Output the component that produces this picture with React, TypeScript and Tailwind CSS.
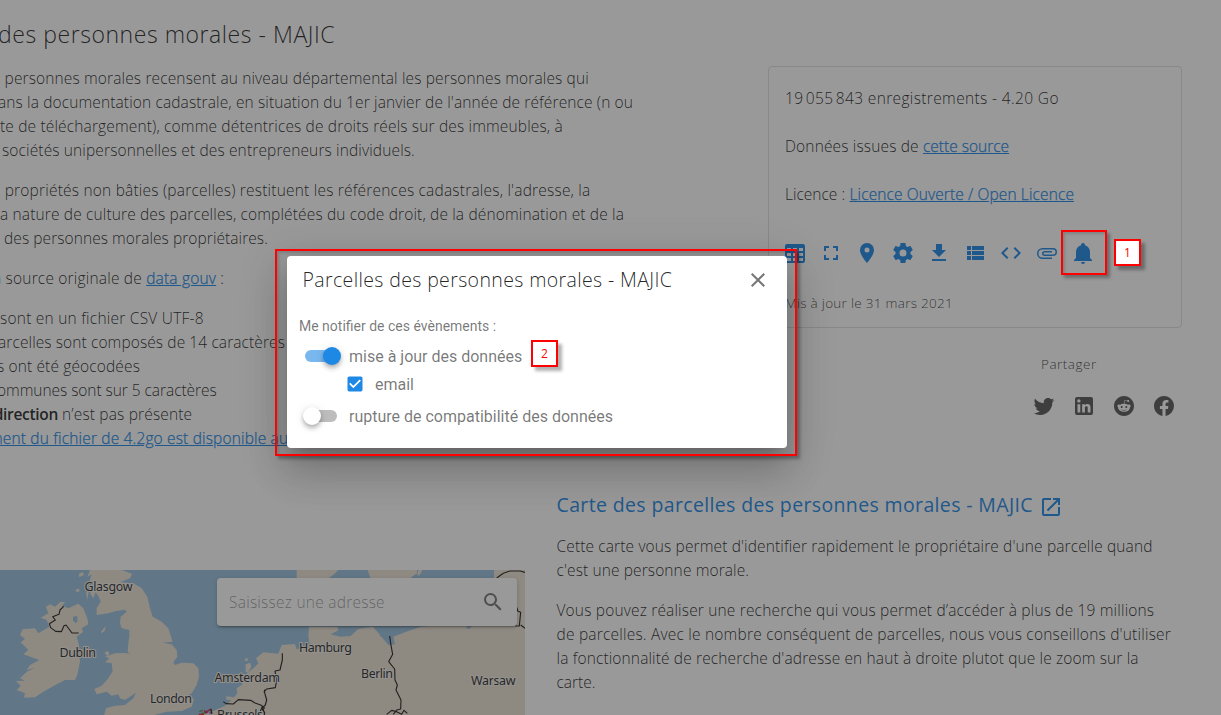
import React from "react";

const icons = {
  tableLarge:
    "M4,3H20A2,2 0 0,1 22,5V20A2,2 0 0,1 20,22H4A2,2 0 0,1 2,20V5A2,2 0 0,1 4,3M4,7V10H8V7H4M10,7V10H14V7H10M20,10V7H16V10H20M4,12V15H8V12H4M4,20H8V17H4V20M10,12V15H14V12H10M10,20H14V17H10V20M20,20V17H16V20H20M20,12H16V15H20V12Z",
  fullscreen:
    "M5,5H10V7H7V10H5V5M14,5H19V10H17V7H14V5M17,14H19V19H14V17H17V14M10,17V19H5V14H7V17H10Z",
  marker:
    "M12,11.5A2.5,2.5 0 0,1 9.5,9A2.5,2.5 0 0,1 12,6.5A2.5,2.5 0 0,1 14.5,9A2.5,2.5 0 0,1 12,11.5M12,2A7,7 0 0,0 5,9C5,14.25 12,22 12,22C12,22 19,14.25 19,9A7,7 0 0,0 12,2Z",
  cog: "M12,15.5A3.5,3.5 0 0,1 8.5,12A3.5,3.5 0 0,1 12,8.5A3.5,3.5 0 0,1 15.5,12A3.5,3.5 0 0,1 12,15.5M19.43,12.97C19.47,12.65 19.5,12.33 19.5,12C19.5,11.67 19.47,11.34 19.43,11L21.54,9.37C21.73,9.22 21.78,8.95 21.66,8.73L19.66,5.27C19.54,5.05 19.27,4.96 19.05,5.05L16.56,6.05C16.04,5.66 15.5,5.32 14.87,5.07L14.5,2.42C14.46,2.18 14.25,2 14,2H10C9.75,2 9.54,2.18 9.5,2.42L9.13,5.07C8.5,5.32 7.96,5.66 7.44,6.05L4.95,5.05C4.73,4.96 4.46,5.05 4.34,5.27L2.34,8.73C2.21,8.95 2.27,9.22 2.46,9.37L4.57,11C4.53,11.34 4.5,11.67 4.5,12C4.5,12.33 4.53,12.65 4.57,12.97L2.46,14.63C2.27,14.78 2.21,15.05 2.34,15.27L4.34,18.73C4.46,18.95 4.73,19.03 4.95,18.95L7.44,17.94C7.96,18.34 8.5,18.68 9.13,18.93L9.5,21.58C9.54,21.82 9.75,22 10,22H14C14.25,22 14.46,21.82 14.5,21.58L14.87,18.93C15.5,18.67 16.04,18.34 16.56,17.94L19.05,18.95C19.27,19.03 19.54,18.95 19.66,18.73L21.66,15.27C21.78,15.05 21.73,14.78 21.54,14.63L19.43,12.97Z",
  download: "M5,20H19V18H5M19,9H15V3H9V9H5L12,16L19,9Z",
  viewList: "M9,5V9H21V5M9,19H21V15H9M9,14H21V10H9M4,9H8V5H4M4,19H8V15H4M4,14H8V10H4V14Z",
  code: "M14.6,16.6L19.2,12L14.6,7.4L16,6L22,12L16,18L14.6,16.6M9.4,16.6L4.8,12L9.4,7.4L8,6L2,12L8,18L9.4,16.6Z",
  attachment:
    "M7.5,18A5.5,5.5 0 0,1 2,12.5A5.5,5.5 0 0,1 7.5,7H18A4,4 0 0,1 22,11A4,4 0 0,1 18,15H9.5A2.5,2.5 0 0,1 7,12.5A2.5,2.5 0 0,1 9.5,10H17V11.5H9.5A1,1 0 0,0 8.5,12.5A1,1 0 0,0 9.5,13.5H18A2.5,2.5 0 0,0 20.5,11A2.5,2.5 0 0,0 18,8.5H7.5A4,4 0 0,0 3.5,12.5A4,4 0 0,0 7.5,16.5H17V18H7.5Z",
  bell: "M21,19V20H3V19L5,17V11C5,7.9 7.03,5.17 10,4.29C10,4.19 10,4.1 10,4A2,2 0 0,1 12,2A2,2 0 0,1 14,4C14,4.1 14,4.19 14,4.29C16.97,5.17 19,7.9 19,11V17L21,19M14,21A2,2 0 0,1 12,23A2,2 0 0,1 10,21",
  twitter:
    "M22.46,6C21.69,6.35 20.86,6.58 20,6.69C20.88,6.16 21.56,5.32 21.88,4.31C21.05,4.81 20.13,5.16 19.16,5.36C18.37,4.5 17.26,4 16,4C13.65,4 11.73,5.92 11.73,8.29C11.73,8.63 11.77,8.96 11.84,9.27C8.28,9.09 5.11,7.38 3,4.79C2.63,5.42 2.42,6.16 2.42,6.94C2.42,8.43 3.17,9.75 4.33,10.5C3.62,10.5 2.96,10.3 2.38,10C2.38,10 2.38,10 2.38,10.03C2.38,12.11 3.86,13.85 5.82,14.24C5.46,14.34 5.08,14.39 4.69,14.39C4.42,14.39 4.15,14.36 3.89,14.31C4.43,16 6,17.26 7.89,17.29C6.43,18.45 4.58,19.13 2.56,19.13C2.22,19.13 1.88,19.11 1.54,19.07C3.44,20.29 5.7,21 8.12,21C16,21 20.33,14.46 20.33,8.79C20.33,8.6 20.33,8.42 20.32,8.23C21.16,7.63 21.88,6.87 22.46,6Z",
  linkedin:
    "M19 3A2 2 0 0 1 21 5V19A2 2 0 0 1 19 21H5A2 2 0 0 1 3 19V5A2 2 0 0 1 5 3H19M18.5 18.5V13.2A3.26 3.26 0 0 0 15.24 9.94C14.39 9.94 13.4 10.46 12.92 11.24V10.13H10.13V18.5H12.92V13.57C12.92 12.8 13.54 12.17 14.31 12.17A1.4 1.4 0 0 1 15.71 13.57V18.5H18.5M6.88 8.56A1.68 1.68 0 0 0 8.56 6.88C8.56 5.95 7.81 5.19 6.88 5.19A1.69 1.69 0 0 0 5.19 6.88C5.19 7.81 5.95 8.56 6.88 8.56M8.27 18.5V10.13H5.5V18.5H8.27Z",
  reddit:
    "M14.5 15.41C14.58 15.5 14.58 15.69 14.5 15.8C13.77 16.5 12.41 16.56 12 16.56C11.61 16.56 10.25 16.5 9.54 15.8C9.44 15.69 9.44 15.5 9.54 15.41C9.65 15.31 9.82 15.31 9.92 15.41C10.38 15.87 11.33 16 12 16C12.69 16 13.66 15.87 14.1 15.41C14.21 15.31 14.38 15.31 14.5 15.41M10.75 13.04C10.75 12.47 10.28 12 9.71 12C9.14 12 8.67 12.47 8.67 13.04C8.67 13.61 9.14 14.09 9.71 14.08C10.28 14.08 10.75 13.61 10.75 13.04M14.29 12C13.72 12 13.25 12.5 13.25 13.05S13.72 14.09 14.29 14.09C14.86 14.09 15.33 13.61 15.33 13.05S14.86 12 14.29 12M22 12C22 17.5 17.5 22 12 22S2 17.5 2 12C2 6.5 6.5 2 12 2S22 6.5 22 12M18.67 12C18.67 11.19 18 10.54 17.22 10.54C16.82 10.54 16.46 10.7 16.2 10.95C15.2 10.23 13.83 9.77 12.3 9.71L12.97 6.58L15.14 7.05C15.16 7.6 15.62 8.04 16.18 8.04C16.75 8.04 17.22 7.57 17.22 7C17.22 6.43 16.75 5.96 16.18 5.96C15.77 5.96 15.41 6.2 15.25 6.55L12.82 6.03C12.75 6 12.68 6.03 12.63 6.07C12.57 6.11 12.54 6.17 12.53 6.24L11.79 9.72C10.24 9.77 8.84 10.23 7.82 10.96C7.56 10.71 7.2 10.56 6.81 10.56C6 10.56 5.35 11.21 5.35 12C5.35 12.61 5.71 13.11 6.21 13.34C6.19 13.5 6.18 13.62 6.18 13.78C6.18 16 8.79 17.85 12 17.85C15.23 17.85 17.85 16.03 17.85 13.78C17.85 13.64 17.84 13.5 17.81 13.34C18.31 13.11 18.67 12.6 18.67 12Z",
  facebook:
    "M12 2.04C6.5 2.04 2 6.53 2 12.06C2 17.06 5.66 21.21 10.44 21.96V14.96H7.9V12.06H10.44V9.85C10.44 7.34 11.93 5.96 14.22 5.96C15.31 5.96 16.45 6.15 16.45 6.15V8.62H15.19C13.95 8.62 13.56 9.39 13.56 10.18V12.06H16.34L15.89 14.96H13.56V21.96A10 10 0 0 0 22 12.06C22 6.53 17.5 2.04 12 2.04Z",
  close:
    "M19,6.41L17.59,5L12,10.59L6.41,5L5,6.41L10.59,12L5,17.59L6.41,19L12,13.41L17.59,19L19,17.59L13.41,12L19,6.41Z",
  magnify:
    "M9.5,3A6.5,6.5 0 0,1 16,9.5C16,11.11 15.41,12.59 14.44,13.73L14.71,14H15.5L20.5,19L19,20.5L14,15.5V14.71L13.73,14.44C12.59,15.41 11.11,16 9.5,16A6.5,6.5 0 0,1 3,9.5A6.5,6.5 0 0,1 9.5,3M9.5,5C7,5 5,7 5,9.5C5,12 7,14 9.5,14C12,14 14,12 14,9.5C14,7 12,5 9.5,5Z",
  openInNew:
    "M14,3V5H17.59L7.76,14.83L9.17,16.24L19,6.41V10H21V3M19,19H5V5H12V3H5C3.89,3 3,3.9 3,5V19A2,2 0 0,0 5,21H19A2,2 0 0,0 21,19V12H19V19Z",
  checkbox:
    "M10,17L5,12L6.41,10.58L10,14.17L17.59,6.58L19,8M19,3H5C3.89,3 3,3.89 3,5V19A2,2 0 0,0 5,21H19A2,2 0 0,0 21,19V5C21,3.89 20.1,3 19,3Z",
};

function Icon({ name, className = "size-6" }: { name: keyof typeof icons; className?: string }) {
  return (
    <svg viewBox="0 0 24 24" className={`shrink-0 ${className}`} fill="currentColor" aria-hidden="true">
      <path d={icons[name]} />
    </svg>
  );
}

function Line({ className = "", children }: { className?: string; children: React.ReactNode }) {
  return <span className={`block h-6 whitespace-nowrap ${className}`}>{children}</span>;
}

function Link({ className = "", children }: { className?: string; children: React.ReactNode }) {
  return (
    <a href="#" className={`text-[#1e88e5] underline [-webkit-text-stroke:0.25px_#1e88e5] ${className}`}>
      {children}
    </a>
  );
}

function Description() {
  return (
    <div className="h-[570px] w-[752px] shrink-0 pt-4">
      <h1 className="-ml-0.5 text-[23px] leading-9 font-light tracking-[0.55px] whitespace-nowrap">
        des personnes morales - MAJIC
      </h1>
      <p className="mt-3.5">
        <Line className="-ml-[7px] tracking-[0.135px]">
          s personnes morales recensent au niveau départemental les personnes morales qui
        </Line>
        <Line className="-ml-0.5 tracking-[0.12px]">
          ans la documentation cadastrale, en situation du 1er janvier de l'année de référence (n ou
        </Line>
        <Line className="tracking-[0.15px]">
          te de téléchargement), comme détentrices de droits réels sur des immeubles, à
        </Line>
        <Line className="ml-0.5 tracking-[0.13px]">sociétés unipersonnelles et des entrepreneurs individuels.</Line>
      </p>
      <p className="mt-4">
        <Line className="-ml-[7px] tracking-[0.2px]">
          s propriétés non bâties (parcelles) restituent les références cadastrales, l'adresse, la
        </Line>
        <Line className="tracking-[0.14px]">
          a nature de culture des parcelles, complétées du code droit, de la dénomination et de la
        </Line>
        <Line className="ml-1 tracking-[0.07px]">des personnes morales propriétaires.</Line>
      </p>
      <p className="mt-4">
        <Line className="-ml-[7px] tracking-[0.19px]">
          a source originale de <Link>data gouv</Link> :
        </Line>
      </p>
      <ul className="mt-4">
        <li>
          <Line className="tracking-[0.23px]">sont en un fichier CSV UTF-8</Line>
        </li>
        <li>
          <Line className="-ml-0.5 tracking-[0.1px]">arcelles sont composés de 14 caractères</Line>
        </li>
        <li>
          <Line className="-ml-[3px] tracking-[0.13px]">s ont été géocodées</Line>
        </li>
        <li>
          <Line className="-ml-[3px] tracking-[-0.05px]">ommunes sont sur 5 caractères</Line>
        </li>
        <li>
          <Line className="flex tracking-[0.16px]">
            <b className="flex w-[58px] justify-end font-semibold tracking-[-0.3px]">direction</b>
            <span className="ml-1">n’est pas présente</span>
          </Line>
        </li>
        <li>
          <Line className="-ml-[11px] tracking-[0.16px]">
            <Link>ment du fichier de 4.2go est disponible au</Link>
          </Line>
        </li>
      </ul>
    </div>
  );
}

function InfoCard() {
  return (
    <div className="h-[262px] rounded border border-black/12 px-4 pt-[19px]">
      <p className="h-6 tracking-[0.36px] whitespace-nowrap">19&#8239;055&#8239;843 enregistrements - 4.20 Go</p>
      <p className="mt-6 flex h-6 whitespace-nowrap">
        <span className="w-[138px] tracking-[0.15px]">Données issues de</span>
        <Link className="tracking-[-0.01px]">cette source</Link>
      </p>
      <p className="mt-6 flex h-6 whitespace-nowrap">
        <span className="w-[64.5px] shrink-0">Licence :</span>
        <Link className="tracking-[0.11px]">Licence Ouverte / Open Licence</Link>
      </p>
      <div className="mt-[35px] -ml-0.5 flex gap-3 text-[#1e88e5]">
        <Icon name="tableLarge" />
        <Icon name="fullscreen" />
        <Icon name="marker" />
        <Icon name="cog" />
        <Icon name="download" />
        <Icon name="viewList" />
        <Icon name="code" />
        <Icon name="attachment" />
        <Icon name="bell" />
      </div>
      <p className="mt-[26px] text-[13.5px] tracking-[0.28px] text-black/75">Mis à jour le 31 mars 2021</p>
    </div>
  );
}

function Side() {
  return (
    <aside className="ml-4 w-[414px] shrink-0 pt-[66px]">
      <InfoCard />
      <p className="mt-6 ml-[273px] text-[13.5px] tracking-[0.5px] text-black/75">Partager</p>
      <div className="mt-[18px] ml-[264px] flex gap-4 text-black/66">
        <Icon name="twitter" />
        <Icon name="linkedin" />
        <Icon name="reddit" />
        <Icon name="facebook" />
      </div>
    </aside>
  );
}

const cities: [string, number, number, number][] = [
  ["Glasgow", 84.5, 21, 48],
  ["Dublin", 59.5, 87, 36.5],
  ["London", 150, 133, 42],
  ["Amsterdam", 214.5, 111.5, 65.5],
  ["Brussels", 217, 148.5, 46],
  ["Hamburg", 299, 81.5, 53],
  ["Berlin", 361, 108, 32],
  ["Warsaw", 471, 115, 44.5],
];

function MapView() {
  return (
    <div className="relative h-[145px] w-[525px] shrink-0 overflow-hidden bg-[#98bfdc]">
      <svg viewBox="0 0 525 145" className="block h-[145px] w-[525px]">
        <g transform="scale(0.33333) translate(0 -15)" fill="#ebe3d5">
          <path d="M270,15 L262,35 275,28 268,50 282,48 278,75 270,85 280,100 287,82 296,95 302,110 290,130 290,150 325,145 348,138 375,134 380,140 362,155 360,175 365,190 388,195 388,215 385,235 383,262 392,266 372,264 345,265 315,275 328,280 315,292 335,295 338,318 325,340 305,362 283,372 290,388 320,380 335,392 355,388 360,400 375,405 408,383 400,400 375,420 345,422 318,430 312,452 455,452 500,440 545,438 575,425 582,402 560,393 575,385 590,360 597,335 595,310 580,295 545,293 525,300 520,292 532,275 530,255 515,238 487,233 518,230 505,190 485,170 458,155 450,130 442,95 425,70 400,55 360,52 390,40 396,26 365,15Z" />
          <path d="M182,110 L165,125 150,118 138,125 145,145 122,158 140,165 148,185 115,205 105,190 68,193 60,210 75,222 62,232 85,255 70,268 118,285 90,300 80,315 105,308 80,320 60,340 75,347 48,348 62,362 50,375 75,385 72,398 105,397 130,380 170,358 195,345 225,345 232,330 240,290 237,240 230,215 250,200 245,190 265,178 262,160 250,130 235,116 205,130 185,122 196,112Z" />
          <path d="M228,72h10v8h-10zM236,28l12,-8 4,10 -14,6zM258,82l8,-2 -4,24zM303,200l14,-17 -3,14 -9,8zM313,265l8,-8 8,8 -6,8zM735,280h8v8h-8zM737,320v-22l14,-5 3,12 -10,18zM678,394l20,2 8,10 -26,-2z" />
          <path d="M600,452 L640,438 675,422 695,405 712,385 710,370 725,360 735,330 760,310 775,295 768,280 790,262 835,266 845,240 885,237 890,252 935,248 928,232 925,212 927,185 1012,185 1015,196 992,208 1020,215 1052,213 1075,192 1118,185 1136,205 1155,228 1165,240 1185,238 1180,215 1215,202 1262,185 1482,170 1482,15 1585,15 1585,455 600,455Z" />
          <path d="M890,15h125l-12,12 -16,12h-97zM1103,15h148v10l-20,14h-120zM1255,15h12l-8,16h-8z" />
          <g fill="#98bfdc">
            <path d="M219,155l12,-2 2,14 -5,8 -9,-8zM1400,184h16l-8,7h-8zM1140,205l16,5 -6,8 -10,-4z" />
          </g>
          <g fill="none" stroke="#26201f" strokeWidth="3.4" strokeLinejoin="round">
            <path d="M191,124 L180,135 177,148 158,155 166,165 148,176 152,188 167,199 184,200 192,182 198,180 207,192 216,204 236,204" />
            <path d="M670,410 L678,416 700,417 715,404 752,406 765,414 782,420 795,430" />
            <path d="M847,265 L847,285 840,315 825,318 830,345 826,368 800,372 793,380 800,405 796,420 785,430 795,445" />
            <path d="M1169,213 L1172,235 1178,268 1166,290 1184,312 1185,345 1192,360 1188,375 1203,405 1202,432 1190,435 1180,448 M1160,448 L1175,436 1190,440 1205,448 1212,436 1222,445" />
            <path d="M1490,39 L1510,25 1530,18 1560,18 1575,22 M1551,128 L1553,138 1562,142 1558,183 1545,183 M1562,180 L1575,190" />
            <path d="M780,440 L788,424 794,452 M795,374 l-3,8" />
          </g>
          <g fill="none" strokeWidth="4">
            <path d="M598,440l10,-4 M604,446l14,-4" stroke="#4e9a3f" />
            <path d="M612,436l6,8 8,-8 8,-4 M596,448h16" stroke="#e02a2a" />
            <path d="M618,436l4,8 M628,444h8" stroke="#a03bc0" />
            <path d="M632,432l4,14" stroke="#26201f" />
          </g>
        </g>
        <g
          fontFamily="Noto Sans, sans-serif"
          fontSize="12.5"
          fontWeight="400"
          fill="#2e2e2e"
          stroke="#f3efe8"
          strokeWidth="2.2"
          strokeLinejoin="round"
        >
          {cities.map(([name, x, y, width]) => (
            <text key={name} x={x} y={y} textLength={width} style={{ paintOrder: "stroke" }}>
              {name}
            </text>
          ))}
        </g>
      </svg>
      <div className="absolute top-2 right-2 flex h-12 w-[300px] items-center justify-between rounded bg-white pr-3 pl-3 shadow-[0_3px_1px_-2px_rgba(0,0,0,.2),0_2px_2px_0_rgba(0,0,0,.14),0_1px_5px_0_rgba(0,0,0,.12)]">
        <span className="tracking-[0.24px] whitespace-nowrap text-black/42">Saisissez une adresse</span>
        <Icon name="magnify" className="size-6 text-black/54" />
      </div>
    </div>
  );
}

function MapSection() {
  return (
    <section className="absolute top-[490px] left-[556.5px] w-[630px]">
      <h2 className="flex h-8 items-center whitespace-nowrap text-[#1e88e5]">
        <span className="-mt-0.5 w-[482px] text-[19.5px] font-normal tracking-[0.36px]">
          Carte des parcelles des personnes morales - MAJIC
        </span>
        <Icon name="openInNew" className="mt-px size-6" />
      </h2>
      <p className="mt-3">
        <Line className="tracking-[0.125px]">
          Cette carte vous permet d'identifier rapidement le propriétaire d'une parcelle quand
        </Line>
        <Line className="tracking-[0.11px]">c'est une personne morale.</Line>
      </p>
      <p className="mt-4">
        <Line className="tracking-[0.165px]">
          Vous pouvez réaliser une recherche qui vous permet d’accéder à plus de 19 millions
        </Line>
        <Line className="tracking-[0.205px]">
          de parcelles. Avec le nombre conséquent de parcelles, nous vous conseillons d'utiliser
        </Line>
        <Line className="tracking-[0.13px]">
          la fonctionnalité de recherche d'adresse en haut à droite plutot que le zoom sur la
        </Line>
        <Line>carte.</Line>
      </p>
    </section>
  );
}

const thumb =
  "absolute top-1/2 size-[18px] -translate-y-1/2 rounded-full shadow-[0_2px_4px_-1px_rgba(0,0,0,.2),0_4px_5px_0_rgba(0,0,0,.14),0_1px_10px_0_rgba(0,0,0,.12)]";

function Switch({ on }: { on: boolean }) {
  return (
    <span className="relative ml-4 h-6 w-[46px] shrink-0">
      <span
        className={`absolute top-1/2 left-0.5 h-3 w-8 -translate-y-1/2 rounded-full ${on ? "bg-[#78b8ef]" : "bg-[#bdbdbd]"}`}
      />
      <span className={`${thumb} ${on ? "left-5 bg-[#1e88e5]" : "left-0 bg-white"}`} />
    </span>
  );
}

function NotifyDialog() {
  return (
    <div
      role="dialog"
      className="absolute top-64 left-[287px] h-48 w-[500px] rounded bg-white shadow-[0_11px_15px_-7px_rgba(0,0,0,.2),0_24px_38px_3px_rgba(0,0,0,.14),0_9px_46px_8px_rgba(0,0,0,.12)]"
    >
      <div className="flex h-12 items-center justify-between pr-[17px] pl-[15.5px]">
        <h3 className="-mt-px text-[19.5px] font-light tracking-[0.37px] whitespace-nowrap text-black/87">
          Parcelles des personnes morales - MAJIC
        </h3>
        <Icon name="close" className="size-6 text-black/54" />
      </div>
      <div className="font-[Roboto,sans-serif] text-base font-normal text-black/54">
        <p className="mt-3 ml-3 h-5 text-sm leading-5">Me notifier de ces évènements :</p>
        <label className="mt-2 flex h-6 items-center">
          <Switch on />
          <span className="mt-0.5">mise à jour des données</span>
        </label>
        <label className="mt-1 ml-[58px] flex h-6 items-center">
          <Icon name="checkbox" className="size-5 text-[#1e88e5]" />
          <span className="mt-0.5 ml-2.5">email</span>
        </label>
        <label className="mt-2 flex h-6 items-center">
          <Switch on={false} />
          <span className="mt-0.5">rupture de compatibilité des données</span>
        </label>
      </div>
    </div>
  );
}

function Callout({ className, children }: { className: string; children?: React.ReactNode }) {
  return (
    <div
      className={`absolute flex items-center justify-center border-2 border-[#ff0000] font-['Open_Sans',sans-serif] text-xs font-normal text-[#ff0000] ${className}`}
    >
      {children}
    </div>
  );
}

export default function App() {
  return (
    <div className="relative h-[715px] w-[1221px] overflow-hidden bg-white font-['Open_Sans','Noto_Sans',sans-serif] text-[15.5px] leading-6 font-light text-black/87">
      <div className="flex h-[570px]">
        <Description />
        <Side />
      </div>
      <MapView />
      <MapSection />
      <div className="absolute inset-0 bg-[#212121]/46" />
      <NotifyDialog />
      <Callout className="top-[249px] left-[275px] h-[207px] w-[522px] shadow-[3px_3px_3px_rgba(0,0,0,.3),inset_3px_3px_3px_-1px_rgba(0,0,0,.15)] [clip-path:polygon(-10px_-10px,540px_-10px,540px_220px,-10px_220px,-10px_-10px,12px_7px,12px_199px,512px_199px,512px_7px,12px_7px)]" />
      <Callout className="top-[230px] left-[1061px] h-[45px] w-[46px] shadow-[3px_3px_3px_rgba(0,0,0,.3),inset_3px_3px_3px_-1px_rgba(0,0,0,.15)]" />
      <Callout className="top-[239px] left-[1114px] size-[27px] bg-white shadow-[4px_4px_3px_rgba(0,0,0,.3)]">1</Callout>
      <Callout className="top-[340px] left-[531px] size-[27px] bg-white shadow-[4px_4px_3px_rgba(0,0,0,.3)]">2</Callout>
    </div>
  );
}
